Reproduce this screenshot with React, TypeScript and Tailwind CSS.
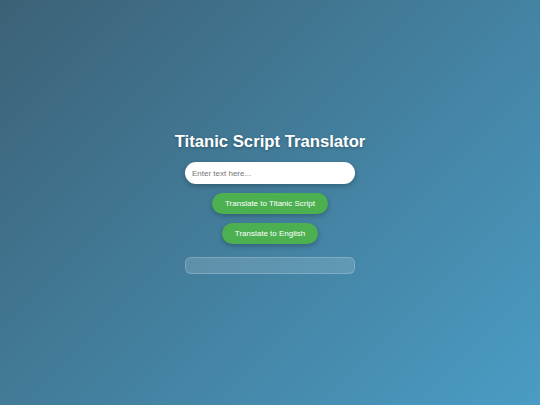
import React, { useState } from 'react';

const App: React.FC = () => {
  const [text, setText] = useState('');
  const [output, setOutput] = useState('');

  return (
    <div className="flex min-h-screen w-full flex-col items-center justify-center bg-[linear-gradient(135deg,#3c6176_0%,#4a9cc4_100%)] font-['Liberation_Sans',Arial,sans-serif]">
      <h1 className="mb-[9px] text-[16.7px] leading-[22px] font-bold text-white [text-shadow:0_1px_3px_rgba(0,0,0,0.3)]">
        Titanic Script Translator
      </h1>
      <input
        type="text"
        value={text}
        onChange={(e) => setText(e.target.value)}
        placeholder="Enter text here..."
        className="h-[22px] w-[170px] rounded-full bg-white px-[7px] text-[8px] text-gray-800 shadow-[0_2px_5px_rgba(0,0,0,0.25)] outline-none placeholder:text-[#757575]"
      />
      <button
        onClick={() => setOutput(text)}
        className="mt-[9px] h-[21px] rounded-full bg-[#4caf50] px-[13px] text-[8px] text-white shadow-[0_2px_5px_rgba(0,0,0,0.25)]"
      >
        Translate to Titanic Script
      </button>
      <button
        onClick={() => setOutput(text)}
        className="mt-[9px] h-[21px] rounded-full bg-[#4caf50] px-[13px] text-[8px] text-white shadow-[0_2px_5px_rgba(0,0,0,0.25)]"
      >
        Translate to English
      </button>
      <div className="mt-[13px] h-[17px] w-[170px] rounded-[6px] border border-white/20 bg-white/15 px-[7px] text-[8px] leading-[15px] text-white">
        {output}
      </div>
    </div>
  );
};

export default App;
